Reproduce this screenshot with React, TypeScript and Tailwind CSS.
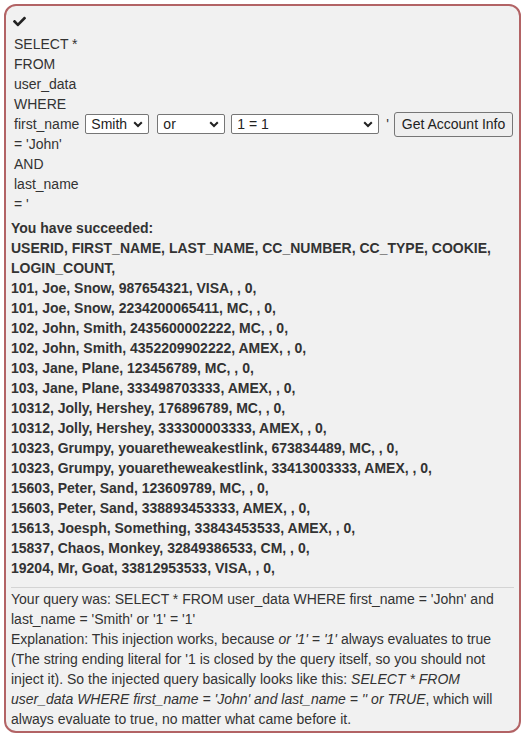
import React from "react";
import { FaCheck } from "react-icons/fa";

const rows = [
  "USERID, FIRST_NAME, LAST_NAME, CC_NUMBER, CC_TYPE, COOKIE, LOGIN_COUNT,",
  "101, Joe, Snow, 987654321, VISA, , 0,",
  "101, Joe, Snow, 2234200065411, MC, , 0,",
  "102, John, Smith, 2435600002222, MC, , 0,",
  "102, John, Smith, 4352209902222, AMEX, , 0,",
  "103, Jane, Plane, 123456789, MC, , 0,",
  "103, Jane, Plane, 333498703333, AMEX, , 0,",
  "10312, Jolly, Hershey, 176896789, MC, , 0,",
  "10312, Jolly, Hershey, 333300003333, AMEX, , 0,",
  "10323, Grumpy, youaretheweakestlink, 673834489, MC, , 0,",
  "10323, Grumpy, youaretheweakestlink, 33413003333, AMEX, , 0,",
  "15603, Peter, Sand, 123609789, MC, , 0,",
  "15603, Peter, Sand, 338893453333, AMEX, , 0,",
  "15613, Joesph, Something, 33843453533, AMEX, , 0,",
  "15837, Chaos, Monkey, 32849386533, CM, , 0,",
  "19204, Mr, Goat, 33812953533, VISA, , 0,",
];

function Sel({ w, text }: { w: string; text: string }) {
  return (
    <div
      className={`${w} h-[20px] bg-white border border-[#767676] rounded-[2px] flex items-center justify-between pl-[5px] pr-[5px] text-[14px] text-[#222]`}
    >
      <span className="leading-none">{text}</span>
      <svg width="10" height="7" viewBox="0 0 10 7">
        <path d="M1.2 1.2 L5 5 L8.8 1.2" stroke="#222" strokeWidth="2" fill="none" />
      </svg>
    </div>
  );
}

export default function App() {
  return (
    <div className="w-[525px] h-[737px] bg-white p-[4px]" style={{ fontFamily: '"Liberation Sans", Arial, sans-serif' }}>
      <div className="w-[517px] h-[729px] bg-[#f1f1f1] border-2 border-[#b26365] rounded-[12px] pt-[6px] px-[5px] text-[14px] leading-[20px] text-[#333]">
        <div className="pl-[2px] h-[20px] flex items-start pt-[3px]">
          <FaCheck className="w-[13px] h-[13px] text-[#222]" />
        </div>
        <div className="pl-[3px] pt-[2px]">
          <div>SELECT *</div>
          <div>FROM</div>
          <div>user_data</div>
          <div>WHERE</div>
          <div className="flex items-center h-[20px]">
            <span>first_name</span>
            <div className="ml-[6px]"><Sel w="w-[64px]" text="Smith" /></div>
            <div className="ml-[8px]"><Sel w="w-[68px]" text="or" /></div>
            <div className="ml-[6px]"><Sel w="w-[148px]" text="1 = 1" /></div>
            <span className="ml-[7px]">'</span>
            <button className="ml-[5px] h-[25px] w-[119px] border border-[#767676] bg-[#efefef] rounded-[3px] text-[14px] text-[#222] leading-none whitespace-nowrap">
              Get Account Info
            </button>
          </div>
          <div>= 'John'</div>
          <div>AND</div>
          <div>last_name</div>
          <div>= '</div>
        </div>
        <div className="font-bold mt-[4px]">
          <div>You have succeeded:</div>
          {rows.map((r, i) => (
            <div key={i}>{r}</div>
          ))}
        </div>
        <div className="mt-[9px] border-t border-[#d4d4d4] pt-[1px] pr-[2px]">
          Your query was: SELECT * FROM user_data WHERE first_name = 'John' and last_name = 'Smith' or '1' = '1'
          <br />
          Explanation: This injection works, because <i>or '1' = '1'</i> always evaluates to true (The string ending literal for '1 is closed by the query itself, so you should not inject it). So the injected query basically looks like this: <i>SELECT * FROM user_data WHERE first_name = 'John' and last_name = '' or TRUE</i>, which will always evaluate to true, no matter what came before it.
        </div>
      </div>
    </div>
  );
}
